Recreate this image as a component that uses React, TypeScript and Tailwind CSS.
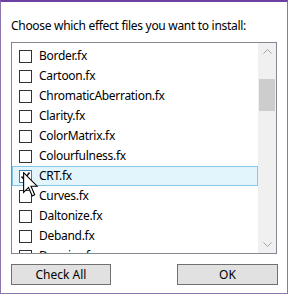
const files = [
  "Border.fx",
  "Cartoon.fx",
  "ChromaticAberration.fx",
  "Clarity.fx",
  "ColorMatrix.fx",
  "Colourfulness.fx",
  "CRT.fx",
  "Curves.fx",
  "Daltonize.fx",
  "Deband.fx",
  "Denoise.fx",
];

const checked = "CRT.fx";

function Chevron({ up }: { up?: boolean }) {
  return (
    <svg width="9" height="5" viewBox="0 0 9 5" className="block">
      <polyline
        points={up ? "0.5,4.5 4.5,0.5 8.5,4.5" : "0.5,0.5 4.5,4.5 8.5,0.5"}
        fill="none"
        stroke="#a3a3a3"
        strokeWidth="1"
      />
    </svg>
  );
}

function Row({ name }: { name: string }) {
  const on = name === checked;
  return (
    <div
      className={`flex h-[20px] shrink-0 items-center border ${
        on ? "border-[#84c6e4] bg-[#e2f4fc]" : "border-transparent"
      }`}
    >
      <div
        className={`ml-[6px] flex h-[13px] w-[13px] items-center justify-center border bg-white ${
          on ? "border-[#3c7fb1]" : "border-[#333333]"
        }`}
      >
        {on && (
          <svg width="11" height="11" viewBox="0 0 11 11">
            <polyline points="1.5,5.5 4,8.5 9.5,1.5" fill="none" stroke="#222" strokeWidth="1.7" />
          </svg>
        )}
      </div>
      <span className="ml-[7px] text-[12px] leading-none tracking-[-0.3px] text-black">{name}</span>
    </div>
  );
}

export default function App() {
  return (
    <div
      className="relative h-[294px] w-[288px] border-x border-b border-t-2 border-x-[#8a76ad] border-b-[#8a76ad] border-t-[#6c40a3] bg-white"
      style={{ fontFamily: '"Noto Sans", "Open Sans", sans-serif' }}
    >
      <div className="flex flex-col px-[10px] pt-[16px]">
        <p className="h-[16px] text-[12px] leading-[16px] tracking-[-0.3px] text-black">
          Choose which effect files you want to install:
        </p>
        <div className="mt-[8px] flex h-[212px] w-[266px] border border-[#828790]">
          <div className="flex w-[246px] flex-col overflow-hidden pt-[3px]">
            {files.map((f) => (
              <Row key={f} name={f} />
            ))}
          </div>
          <div className="flex w-[18px] flex-col bg-[#f0f0f0]">
            <div className="flex h-[17px] items-center justify-center">
              <Chevron up />
            </div>
            <div className="mx-[1px] mt-[19px] h-[32px] bg-[#cdcdcd]" />
            <div className="mt-auto flex h-[17px] items-center justify-center">
              <Chevron />
            </div>
          </div>
        </div>
        <div className="mt-[10px] flex justify-between">
          <button className="h-[21px] w-[100px] border border-[#707070] bg-[#e1e1e1] text-[12px] leading-none text-black">
            Check All
          </button>
          <button className="-mr-[1px] h-[21px] w-[101px] border border-[#707070] bg-[#e1e1e1] text-[12px] leading-none text-black">
            OK
          </button>
        </div>
      </div>
      <svg
        className="absolute left-[22px] top-[170px]"
        width="16"
        height="26"
        viewBox="0 0 13 21"
      >
        <path
          d="M0.5,0.5 L0.5,16.5 L4.5,12.5 L7.5,19.5 L9.5,18.5 L6.5,11.5 L11.5,11.5 Z"
          fill="#fff"
          stroke="#000"
          strokeWidth="0.9"
        />
      </svg>
    </div>
  );
}
